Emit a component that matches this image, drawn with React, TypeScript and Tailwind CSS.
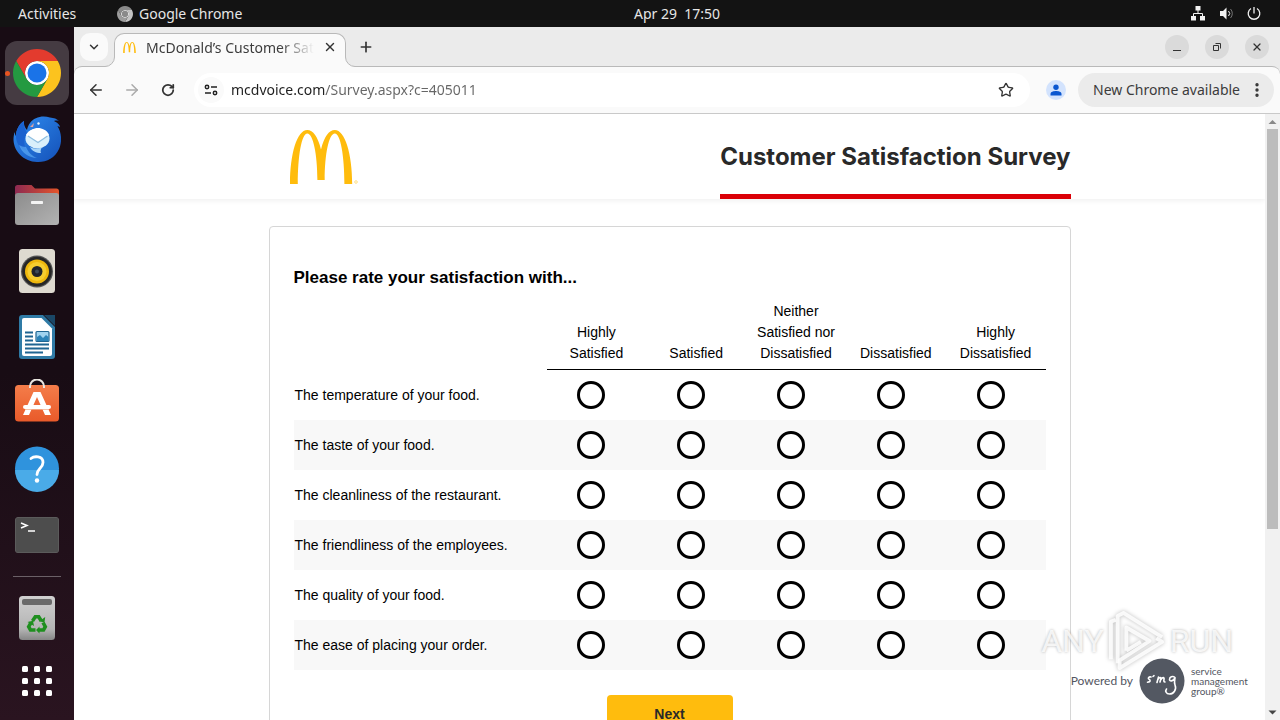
import type { ReactNode } from 'react';
import {
  ArrowLeft,
  ArrowRight,
  ChevronDown,
  EllipsisVertical,
  Plus,
  RotateCw,
  Star,
  X,
} from 'lucide-react';

const QUESTIONS = [
  'The temperature of your food.',
  'The taste of your food.',
  'The cleanliness of the restaurant.',
  'The friendliness of the employees.',
  'The quality of your food.',
  'The ease of placing your order.',
];

const RATINGS = [
  'Highly Satisfied',
  'Satisfied',
  'Neither Satisfied nor Dissatisfied',
  'Dissatisfied',
  'Highly Dissatisfied',
];

const ARCHES =
  'M0 54C0 24 7 0 17.3 0 23 0 28 7 31 19.5 34 7 39 0 44.8 0 55 0 62.2 24 62.2 54H54.4C54.4 26 50.5 3.5 44.8 3.5 39 3.5 34.7 24 34.7 50H27.4C27.4 24 23 3.5 17.3 3.5 11.6 3.5 7.8 26 7.8 54Z';

interface ChromeLogoProps {
  className: string;
  mono?: boolean;
}

function ChromeLogo({ className, mono = false }: ChromeLogoProps) {
  return (
    <svg viewBox="0 0 48 48" className={className} aria-hidden="true">
      <circle cx="24" cy="24" r="12" fill={mono ? '#f2f2f2' : '#fff'} />
      <path
        fill={mono ? '#8a8a8a' : '#e33b2e'}
        d="M24 12h20.78a24 24 0 0 0-41.56 0L13.61 30l.01 0A12 12 0 0 1 24 12Z"
      />
      <path
        fill={mono ? '#c4c4c4' : '#fcc31e'}
        d="M34.39 30 24 48A24 24 0 0 0 44.78 12H24A12 12 0 0 1 34.39 30Z"
      />
      <path
        fill={mono ? '#9c9c9c' : '#249a41'}
        d="M13.61 30 3.22 12A24 24 0 0 0 24 48l10.39-18a12 12 0 0 1-20.78 0Z"
      />
      <circle cx="24" cy="24" r="9.5" fill={mono ? '#8a8a8a' : '#1a73e8'} />
    </svg>
  );
}

function ThunderbirdIcon() {
  return (
    <svg viewBox="0 0 48 48" className="size-12" aria-hidden="true">
      <defs>
        <linearGradient id="tb" x1="0" y1="0" x2="1" y2="1">
          <stop offset="0" stopColor="#2f8df0" />
          <stop offset="1" stopColor="#1450b8" />
        </linearGradient>
      </defs>
      <path
        fill="url(#tb)"
        d="M17 8C21 2 30 0 37 2.5c4 .3 7 1.500 9 3.500-2-.6-3.500-.6-5 0 5 2.500 6 5 6 6-1-.8-2-1-2.500-.8C49 18 49 28 46 34c-4 9-13 13.500-22 13C11 46.500 1 37 .5 25c0-3 .5-6 1-8 .5 2 .8 3 1.500 4C3 15 6 9 11 6c-.5 4 1 7 3 9 .5-3 1.500-5 3-7Z"
      />
      <path fill="#1a62cf" d="M3 21C3 15 6 9 11 6c-1 6 2 9 3 12-3 5-4 12 0 18C7 34 3 28 3 21Z" />
      <path fill="#64b4fa" opacity=".6" d="M6 30c3 8 10 13 18 13-5-2-9-6-11-11-3 0-5-1-7-2Z" />
      <ellipse cx="24.500" cy="23.500" rx="12" ry="10" fill="#d9effb" />
      <path fill="#fff" d="M13 20c3-5 8-7 12-7s9 2 11 7l-11 7Z" />
      <path fill="none" stroke="#90bfe0" strokeWidth="1.200" d="m15 21 10 6.500L34.500 21" />
      <path fill="#a9d5f8" d="M17 32c4 2 8 2 12 0-1 2-2 4-1 6-5 0-9-2-11-6Z" />
      <circle cx="25.500" cy="8.500" r="1.200" fill="#e8f5ff" />
      <path fill="#e0a3a0" d="m17 12 4-4-1 4Z" />
    </svg>
  );
}

function FilesIcon() {
  return (
    <svg viewBox="0 0 48 48" className="size-12" aria-hidden="true">
      <defs>
        <linearGradient id="folderBack" x1="0" y1="0" x2="1" y2="0">
          <stop offset="0" stopColor="#8d2a52" />
          <stop offset="1" stopColor="#e4552a" />
        </linearGradient>
        <linearGradient id="folderFront" x1="0" y1="0" x2="1" y2="1">
          <stop offset="0" stopColor="#8c8c8c" />
          <stop offset="1" stopColor="#b3b3b3" />
        </linearGradient>
      </defs>
      <path fill="url(#folderBack)" d="M2 16V6.500C2 5 3 4 4.500 4h14L22 7.500h21.500C45 7.500 46 8.500 46 10V18H2Z" />
      <path fill="url(#folderFront)" d="M5 12h38a3 3 0 0 1 3 3V41a3 3 0 0 1-3 3H5a3 3 0 0 1-3-3V15a3 3 0 0 1 3-3Z" />
      <rect x="18" y="20" width="12" height="3" rx=".8" fill="#f4f4f4" />
    </svg>
  );
}

function RhythmboxIcon() {
  return (
    <svg viewBox="0 0 48 48" className="size-12" aria-hidden="true">
      <rect x="6" y="2" width="36" height="44" rx="3.500" fill="#dedad0" />
      <circle cx="24" cy="24.500" r="16" fill="#565656" />
      <circle cx="24" cy="24.500" r="14.800" fill="#262626" />
      <circle cx="24" cy="24.500" r="12" fill="#eeb70d" />
      <circle cx="24" cy="24.500" r="9.500" fill="#f5cd2f" />
      <circle cx="24" cy="24.500" r="5.500" fill="#20242b" />
      <circle cx="24" cy="24.500" r="2" fill="#3c4a58" />
    </svg>
  );
}

function WriterIcon() {
  return (
    <svg viewBox="0 0 48 48" className="size-12" aria-hidden="true">
      <path fill="#2f7ba6" d="M9 2h21l12 12v29a3 3 0 0 1-3 3H9a3 3 0 0 1-3-3V5a3 3 0 0 1 3-3Z" />
      <path fill="#1a4766" d="M31 2h11v11Z" />
      <path fill="#fff" d="M11 5h17.500L39 15.500V41a2 2 0 0 1-2 2H11a2 2 0 0 1-2-2V7a2 2 0 0 1 2-2Z" />
      <path
        stroke="#1f6592"
        strokeWidth="1.800"
        d="M12 19.500h8M12 23.500h8M12 27.500h8M12 31.500h24M12 35.500h24M12 39.500h18"
      />
      <rect x="23" y="18.500" width="13" height="10" rx="1" fill="#9fd2ef" stroke="#1f6592" strokeWidth="1.200" />
      <path fill="#2c83b8" d="m24 28 0-4 3-2 3 3 3-3 2.500 2v4Z" />
    </svg>
  );
}

function SoftwareIcon() {
  return (
    <svg viewBox="0 0 48 48" className="size-12" aria-hidden="true">
      <defs>
        <linearGradient id="bag" x1="0" y1="0" x2="0" y2="1">
          <stop offset="0" stopColor="#f47d4a" />
          <stop offset="1" stopColor="#e95a2a" />
        </linearGradient>
      </defs>
      <rect x="2" y="6" width="44" height="36.500" rx="3.500" fill="url(#bag)" />
      <path fill="none" stroke="#e9e6e0" strokeWidth="2" d="M17 9V7.500a7 7 0 0 1 14 0V9" />
      <path fill="#fff" d="M20.500 13h7L38 36h-6L24 18 16 36h-6Z" />
      <rect x="10" y="26" width="28" height="4" rx="2" fill="#fff" />
      <path stroke="#f4b394" strokeWidth=".8" d="M12 30.500h24" />
    </svg>
  );
}

function HelpIcon() {
  return (
    <svg viewBox="0 0 48 48" className="size-12" aria-hidden="true">
      <circle cx="24" cy="23.500" r="22" fill="#2f93dd" />
      <path fill="#4aabe8" d="M2 25h44a22 22 0 0 1-44 0Z" />
      <path
        fill="none"
        stroke="#fff"
        strokeWidth="2.800"
        strokeLinecap="round"
        d="M18 13.500c3-2.500 12-3 12 4 0 5.500-6 6-6 12"
      />
      <circle cx="24" cy="35.500" r="2.200" fill="#fff" />
    </svg>
  );
}

function TerminalIcon() {
  return (
    <svg viewBox="0 0 48 48" className="size-12" aria-hidden="true">
      <rect x="2" y="6" width="44" height="36" rx="3.500" fill="#6b6b6b" />
      <rect x="2.500" y="6.500" width="43" height="35" rx="3" fill="#4d4d4d" />
      <path fill="none" stroke="#fff" strokeWidth="1.500" d="m8 12 6 2.500L8 17M15 20h7" />
    </svg>
  );
}

function TrashIcon() {
  return (
    <svg viewBox="0 0 48 48" className="size-12" aria-hidden="true">
      <defs>
        <linearGradient id="bin" x1="0" y1="0" x2="0" y2="1">
          <stop offset="0" stopColor="#d0d0d0" />
          <stop offset=".75" stopColor="#b4b4b4" />
          <stop offset="1" stopColor="#868686" />
        </linearGradient>
      </defs>
      <rect x="6" y="2" width="36" height="44" rx="3.500" fill="url(#bin)" />
      <rect x="9" y="5" width="30" height="6" rx="2" fill="#6a6a6a" />
      <g fill="none" stroke="#1f8f1f" strokeWidth="3.600">
        <path d="m19.500 27 2.800-4.200h3.400l2.300 3.700" />
        <path d="m30 28.500 2.300 4.200-1.800 3.300H26" />
        <path d="M22.500 36h-5l-1.800-3.300 2.300-4" />
      </g>
      <path fill="#1f8f1f" d="m26 27.500 5.500.8.700-5.200ZM26.500 32.500 23 36l3.500 3.500ZM14.500 28l5.500-1.200 1 5.200Z" />
    </svg>
  );
}

function AppGridIcon() {
  const steps = [9, 21, 33];
  return (
    <svg viewBox="0 0 48 48" className="size-12" aria-hidden="true">
      {steps.map((y) =>
        steps.map((x) => (
          <rect key={`${x}-${y}`} x={x} y={y} width="6" height="6" rx="1.500" fill="#fff" />
        )),
      )}
    </svg>
  );
}

interface DockItemProps {
  label: string;
  active?: boolean;
  children: ReactNode;
}

function DockItem({ label, active = false, children }: DockItemProps) {
  return (
    <button
      type="button"
      aria-label={label}
      className={`relative flex size-16 shrink-0 items-center justify-center rounded-xl ${
        active ? 'bg-[#453b42]' : ''
      }`}
    >
      {active && <span className="absolute left-0 size-[5px] rounded-full bg-[#e95420]" />}
      {children}
    </button>
  );
}

function Dock() {
  return (
    <nav className="flex w-[74px] shrink-0 flex-col items-center gap-[2px] overflow-hidden bg-linear-to-b from-[#180c14] from-50% to-[#2a1420] pt-[14px]">
      <DockItem label="Google Chrome" active>
        <ChromeLogo className="size-12" />
      </DockItem>
      <DockItem label="Thunderbird">
        <ThunderbirdIcon />
      </DockItem>
      <DockItem label="Files">
        <FilesIcon />
      </DockItem>
      <DockItem label="Rhythmbox">
        <RhythmboxIcon />
      </DockItem>
      <DockItem label="LibreOffice Writer">
        <WriterIcon />
      </DockItem>
      <DockItem label="Ubuntu Software">
        <SoftwareIcon />
      </DockItem>
      <DockItem label="Help">
        <HelpIcon />
      </DockItem>
      <DockItem label="Terminal">
        <TerminalIcon />
      </DockItem>
      <div className="my-[7px] h-px w-12 shrink-0 bg-[#6b6067]" />
      <DockItem label="Trash">
        <TrashIcon />
      </DockItem>
      <button type="button" aria-label="Show applications" className="flex h-[58px] shrink-0 items-center">
        <AppGridIcon />
      </button>
    </nav>
  );
}

function TopBar() {
  return (
    <header className="relative flex h-[27px] shrink-0 items-center justify-between bg-[#131313] px-[18px] text-[14px] text-[#e6e6e6]">
      <div className="flex items-center">
        <button type="button" className="w-[99px] text-left">
          Activities
        </button>
        <button type="button" className="flex items-center gap-[6px]">
          <ChromeLogo className="size-4" mono />
          Google Chrome
        </button>
      </div>
      <time className="absolute left-1/2 -translate-x-[6px] whitespace-pre">Apr 29  17:50</time>
      <div className="flex items-center gap-3">
        <svg viewBox="0 0 16 16" className="size-4" fill="#f2f2f2" aria-hidden="true">
          <path d="M5.500 0h5v4.500h-5zM1 10h5v4.500H1zM10 10h5v4.500h-5z" />
          <path fill="none" stroke="#f2f2f2" d="M8 4v3.500M3.500 10V7.500h9V10" />
        </svg>
        <svg viewBox="0 0 16 16" className="size-4" aria-hidden="true">
          <path fill="#f2f2f2" d="M2 5h3l3.500-3.500v12L5 10H2Z" />
          <path fill="none" stroke="#f2f2f2" d="M10.500 5a3.500 3.500 0 0 1 0 5" />
          <path fill="none" stroke="#777" d="M12.500 3a6.500 6.500 0 0 1 0 9" />
        </svg>
        <svg viewBox="0 0 16 16" className="size-4" fill="none" stroke="#f2f2f2" aria-hidden="true">
          <path strokeWidth="1.300" d="M8 1v6.500M5 2.500a5.800 5.800 0 1 0 6 0" />
        </svg>
      </div>
    </header>
  );
}

function TabStrip() {
  return (
    <div className="flex h-[39px] items-end bg-[#ebebeb] pl-[6px]">
      <button
        type="button"
        aria-label="Search tabs"
        className="mb-[5px] flex size-7 items-center justify-center rounded-[10px] bg-[#fafafa]"
      >
        <ChevronDown className="size-[14px] text-[#333]" strokeWidth={2.5} />
      </button>
      <div className="relative z-10 -mb-px ml-[6px] flex h-[34px] w-[232px] items-center rounded-t-[10px] border border-b-0 border-[#b9b9b9] bg-[#fafafa] pb-[7px] pl-2">
        <svg viewBox="0 0 10 10" className="absolute -left-[10px] bottom-0 size-[10px]" aria-hidden="true">
          <path fill="#fafafa" d="M10 0v10H0v-.5A9.500 9.500 0 0 0 9.500 0Z" />
          <path fill="none" stroke="#b9b9b9" d="M0 9.500A9.500 9.500 0 0 0 9.500 0" />
        </svg>
        <svg viewBox="0 0 10 10" className="absolute -right-[10px] bottom-0 size-[10px]" aria-hidden="true">
          <path fill="#fafafa" d="M0 0v10h10v-.5A9.500 9.500 0 0 1 .5 0Z" />
          <path fill="none" stroke="#b9b9b9" d="M10 9.500A9.500 9.500 0 0 1 .5 0" />
        </svg>
        <svg viewBox="0 0 62.200 54" className="h-[11px] w-[13px] shrink-0" aria-hidden="true">
          <path fill="#ffbc0d" d={ARCHES} />
        </svg>
        <span className="ml-[10px] w-[168px] overflow-hidden text-[14px] whitespace-nowrap text-[#3c3c3c] [mask-image:linear-gradient(to_right,#000_80%,transparent)]">
          McDonald’s Customer Satisfaction
        </span>
        <button type="button" aria-label="Close tab" className="ml-[9px]">
          <X className="size-[14px] text-[#333]" strokeWidth={2.500} />
        </button>
      </div>
      <button type="button" aria-label="New tab" className="mb-[11px] ml-3">
        <Plus className="size-4 text-[#333]" strokeWidth={2.500} />
      </button>
      <div className="mr-[11px] mb-[7px] ml-auto flex gap-4">
        <button
          type="button"
          aria-label="Minimize"
          className="flex size-6 items-center justify-center rounded-full bg-[#dadada]"
        >
          <span className="mt-[6px] h-px w-2 bg-[#333]" />
        </button>
        <button
          type="button"
          aria-label="Restore"
          className="flex size-6 items-center justify-center rounded-full bg-[#dadada]"
        >
          <svg viewBox="0 0 8 8" className="size-2" fill="none" stroke="#333" aria-hidden="true">
            <path d="M.5 2.500h5v5h-5zM2.500.5h5v5" />
          </svg>
        </button>
        <button
          type="button"
          aria-label="Close"
          className="flex size-6 items-center justify-center rounded-full bg-[#dadada]"
        >
          <X className="size-3 text-[#333]" strokeWidth={2.500} />
        </button>
      </div>
    </div>
  );
}

function Toolbar() {
  return (
    <div className="bg-[#ebebeb]">
      <div className="flex h-12 items-center rounded-t-lg border-t border-b border-t-[#b9b9b9] border-b-[#c9c9c9] bg-[#fafafa] pr-[6px] pb-px pl-[13px]">
        <div className="flex gap-[18px]">
          <button type="button" aria-label="Back">
            <ArrowLeft className="size-[18px] text-[#333]" />
          </button>
          <button type="button" aria-label="Forward">
            <ArrowRight className="size-[18px] text-[#aaa]" />
          </button>
          <button type="button" aria-label="Reload">
            <RotateCw className="size-[18px] p-[2px] text-[#333]" strokeWidth={3} />
          </button>
        </div>
        <div className="ml-[17px] flex h-[34px] flex-1 items-center rounded-full bg-white pr-4 pl-1">
          <button
            type="button"
            aria-label="View site information"
            className="flex size-[26px] items-center justify-center rounded-full bg-[#fafafa]"
          >
            <svg viewBox="0 0 14 12" className="h-3 w-[14px]" fill="none" stroke="#222" strokeWidth="1.500" aria-hidden="true">
              <circle cx="3" cy="3" r="1.700" />
              <circle cx="11" cy="9" r="1.700" />
              <path d="M7 3h6M1 9h6" />
            </svg>
          </button>
          <input
            type="text"
            aria-label="Address and search bar"
            defaultValue="mcdvoice.com/Survey.aspx?c=405011"
            className="ml-[7px] min-w-0 flex-1 bg-linear-to-r from-[#1f1f1f] from-[94px] to-[#666] to-[94px] bg-clip-text text-[14px] text-transparent outline-none"
          />
          <button type="button" aria-label="Bookmark this tab">
            <Star className="size-4 text-[#333]" />
          </button>
        </div>
        <button
          type="button"
          aria-label="Profile"
          className="ml-4 flex size-5 items-center justify-center rounded-full bg-[#d3e3fd]"
        >
          <svg viewBox="0 0 12 12" className="size-3" fill="#0b57d0" aria-hidden="true">
            <circle cx="6" cy="3.200" r="2.700" />
            <path d="M.5 11.500V10C.5 7.800 3.500 7 6 7s5.500.8 5.500 3v1.500Z" />
          </svg>
        </button>
        <button
          type="button"
          className="ml-3 flex h-[34px] w-[196px] items-center justify-between rounded-full bg-[#ebebeb] pr-2 pl-[15px] text-[14px] text-[#3c3c3c]"
        >
          New Chrome available
          <EllipsisVertical className="size-[18px] text-[#333]" strokeWidth={2.500} />
        </button>
      </div>
    </div>
  );
}

function SurveyTable() {
  return (
    <table className="w-full table-fixed text-[14px] leading-[21px] text-black">
      <thead>
        <tr className="align-bottom">
          <td className="w-[253px]" />
          {RATINGS.map((rating) => (
            <th
              key={rating}
              scope="col"
              className="border-b border-black px-2 pb-[5px] text-center font-normal"
            >
              {rating}
            </th>
          ))}
        </tr>
      </thead>
      <tbody>
        {QUESTIONS.map((question, row) => (
          <tr key={question} className="h-[50px] even:bg-[#f8f8f8]">
            <th scope="row" className="pt-[2px] pl-px text-left font-normal whitespace-nowrap">
              {question}
            </th>
            {RATINGS.map((rating) => (
              <td key={rating} className="pt-px pr-[10px]">
                <input
                  type="radio"
                  name={`question-${row}`}
                  aria-label={`${question} ${rating}`}
                  className="mx-auto block size-7 appearance-none rounded-full border-3 border-black bg-white checked:bg-black"
                />
              </td>
            ))}
          </tr>
        ))}
      </tbody>
    </table>
  );
}

function SurveyPage() {
  return (
    <div className="min-w-0 flex-1 overflow-hidden bg-white font-['Liberation_Sans',Arial,sans-serif]">
      <header className="h-[85px] shadow-[0_2px_5px_rgba(0,0,0,0.06)]">
        <div className="mx-auto flex h-full max-w-[802px] justify-between pl-[21px]">
          <svg viewBox="0 0 68 54" className="mt-4 h-[54px] w-[68px]" role="img" aria-label="McDonald's">
            <path fill="#ffbc0d" d={ARCHES} />
            <circle cx="66" cy="52" r="1.300" fill="none" stroke="#ffd76b" strokeWidth=".8" />
          </svg>
          <h1 className="flex items-center border-b-5 border-[#db0007] pt-[6px] font-['Inter',sans-serif] text-[24px] font-bold text-[#292929]">
            Customer Satisfaction Survey
          </h1>
        </div>
      </header>
      <main className="mx-auto mt-[27px] max-w-[802px] rounded border border-[#d6d6d6] px-6 pt-[38px] pb-10">
        <h2 className="text-[17px] leading-[26px] font-bold text-black">
          Please rate your satisfaction with...
        </h2>
        <div className="mt-[10px]">
          <SurveyTable />
        </div>
        <button
          type="submit"
          className="mx-auto mt-[25px] block h-10 w-[126px] rounded bg-[#ffbc0d] text-[14px] font-bold text-[#292929]"
        >
          Next
        </button>
      </main>
    </div>
  );
}

function PoweredBy() {
  return (
    <div className="absolute right-[29px] bottom-4 flex items-center gap-[6px] font-['Lato',sans-serif] text-[#53565f]">
      <span className="text-[12px]">Powered by</span>
      <svg viewBox="0 0 46 46" className="size-[46px]" role="img" aria-label="smg">
        <circle cx="23" cy="23" r="22.500" fill="#535862" />
        <g fill="none" stroke="#fff" strokeWidth="1.600" strokeLinecap="round" strokeLinejoin="round">
          <path d="M12 19c-2-.5-3.500 1-2 2.200 1.500 1 2 2.800-1.500 3M14 18.500l1-.8" />
          <path d="M18 24.500c.5-2 1-3.500 1.500-5.500M19.300 21c1.500-2 3-2 2.500 0l-.8 3M22 21.500c1.500-2.500 3.500-2.500 3 0-.3 1.500-.3 2.500 1 2.500" />
          <path d="M36 19.500c-2.500-2-5.500-.5-5.500 2 0 2.200 3.500 2 5.500-1.500-.5 3-1 5 0 7 2 4.500-1.500 9-5.500 9-3.500 0-4.500-3-3-5" />
        </g>
      </svg>
      <div className="flex w-[60px] flex-col text-[10px] leading-[10px]">
        <span>service</span>
        <span>management</span>
        <span>group®</span>
      </div>
    </div>
  );
}

function Watermark() {
  return (
    <div className="pointer-events-none absolute right-[47px] bottom-[48px] flex items-center gap-1 font-['Roboto',sans-serif] text-[32px] leading-[62px] text-white/80 [text-shadow:0_0_3px_rgba(0,0,0,0.3)]">
      <span>ANY</span>
      <svg viewBox="0 0 60 62" className="h-[62px] w-[58px] drop-shadow-[0_0_2px_rgba(0,0,0,0.3)]" aria-hidden="true">
        <g fill="none" stroke="#fff" strokeOpacity=".85" strokeWidth="4" strokeLinejoin="round">
          <path d="M3 50V11l5-2M10 54V5l6-3 40 25" />
          <path d="M19 41V17l24 14-31 20v8l44-27-6-4M19 41l15-9" />
        </g>
      </svg>
      <span>RUN</span>
    </div>
  );
}

function Scrollbar() {
  return (
    <div className="flex w-[15px] shrink-0 flex-col items-center bg-[#f1f1f1]" aria-hidden="true">
      <svg viewBox="0 0 15 15" className="size-[15px] shrink-0">
        <path fill="#888" d="M7.500 6 11.500 10H3.500Z" />
      </svg>
      <div className="h-[66%] w-[11px] bg-[#bcbcbc]" />
      <svg viewBox="0 0 15 15" className="mt-auto size-[15px] shrink-0">
        <path fill="#444" d="M7.500 9.500 11.500 5.500H3.500Z" />
      </svg>
    </div>
  );
}

export default function App() {
  return (
    <div className="flex h-screen flex-col overflow-hidden font-['Noto_Sans',sans-serif]">
      <TopBar />
      <div className="flex min-h-0 flex-1">
        <Dock />
        <div className="flex min-w-0 flex-1 flex-col">
          <TabStrip />
          <Toolbar />
          <div className="relative flex min-h-0 flex-1">
            <SurveyPage />
            <Scrollbar />
            <Watermark />
            <PoweredBy />
          </div>
        </div>
      </div>
    </div>
  );
}
